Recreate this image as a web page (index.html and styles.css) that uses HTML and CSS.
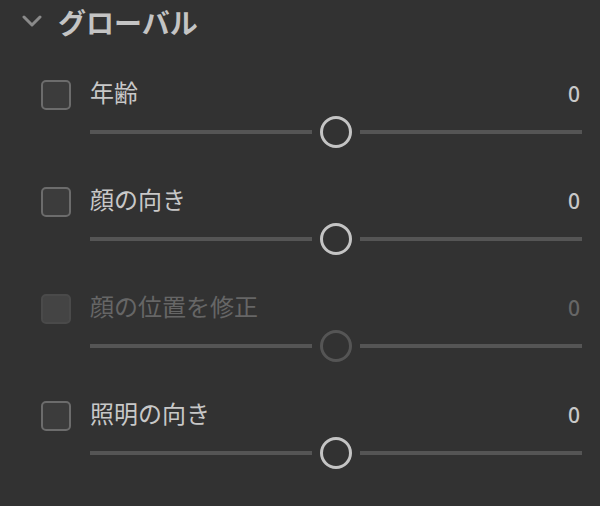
FILE: index.html
```html
<!DOCTYPE html>
<html lang="ja">
<head>
<meta charset="utf-8">
<link rel="stylesheet" href="styles.css">
</head>
<body>
<div class="panel">
  <div class="header">
    <svg class="chevron" width="20" height="12" viewBox="0 0 20 12"><path d="M2 2 L10 10 L18 2" fill="none" stroke="#8a8a8a" stroke-width="3" stroke-linecap="round" stroke-linejoin="round"/></svg>
    <span class="title">グローバル</span>
  </div>
  <div class="rows">
    <div class="row">
      <span class="checkbox"></span>
      <div class="labelline"><span class="label">年齢</span><span class="value">0</span></div>
      <div class="slider"><span class="track"></span><span class="knob"></span><span class="track"></span></div>
    </div>
    <div class="row">
      <span class="checkbox"></span>
      <div class="labelline"><span class="label">顔の向き</span><span class="value">0</span></div>
      <div class="slider"><span class="track"></span><span class="knob"></span><span class="track"></span></div>
    </div>
    <div class="row disabled">
      <span class="checkbox"></span>
      <div class="labelline"><span class="label">顔の位置を修正</span><span class="value">0</span></div>
      <div class="slider"><span class="track"></span><span class="knob"></span><span class="track"></span></div>
    </div>
    <div class="row">
      <span class="checkbox"></span>
      <div class="labelline"><span class="label">照明の向き</span><span class="value">0</span></div>
      <div class="slider"><span class="track"></span><span class="knob"></span><span class="track"></span></div>
    </div>
  </div>
</div>
</body>
</html>
```
FILE: styles.css
```css
html, body {
  margin: 0;
  padding: 0;
  background: #323232;
}
body {
  width: 600px;
  height: 506px;
  overflow: hidden;
  font-family: "Noto Sans CJK JP", "Noto Sans", sans-serif;
  color: #c8c8c8;
}
.header {
  display: flex;
  align-items: center;
  height: 44px;
  padding-left: 22px;
}
.chevron {
  display: block;
  margin-right: 16px;
  margin-top: -2px;
}
.title {
  font-size: 28px;
  font-weight: 700;
  color: #c4c4c4;
  line-height: 1;
}
.rows {
  display: flex;
  flex-direction: column;
  gap: 39px;
  padding: 36px 18px 0 41px;
}
.row {
  display: grid;
  grid-template-columns: 30px 1fr;
  column-gap: 19px;
  row-gap: 6px;
}
.checkbox {
  width: 26px;
  height: 26px;
  border: 2px solid #6c6c6c;
  border-radius: 5px;
  background: #3c3c3c;
}
.labelline {
  display: flex;
  justify-content: space-between;
  align-items: center;
  height: 30px;
}
.label {
  font-size: 24px;
  line-height: 1;
  margin-bottom: 6px;
  color: #c8c8c8;
}
.value {
  font-family: "Noto Sans", sans-serif;
  font-size: 21px;
  font-weight: 500;
  line-height: 1;
  color: #c8c8c8;
  margin-right: 2px;
  margin-bottom: 2px;
}
.slider {
  grid-column: 2;
  display: flex;
  align-items: center;
  gap: 8px;
  height: 32px;
}
.track {
  flex: 1;
  height: 4px;
  background: #555555;
}
.knob {
  width: 26px;
  height: 26px;
  border: 3px solid #c4c4c4;
  border-radius: 50%;
}
.disabled .checkbox {
  border-color: #4a4a4a;
  background: #444444;
}
.disabled .label, .disabled .value {
  color: #666666;
}
.disabled .knob {
  border-color: #555555;
}
```
